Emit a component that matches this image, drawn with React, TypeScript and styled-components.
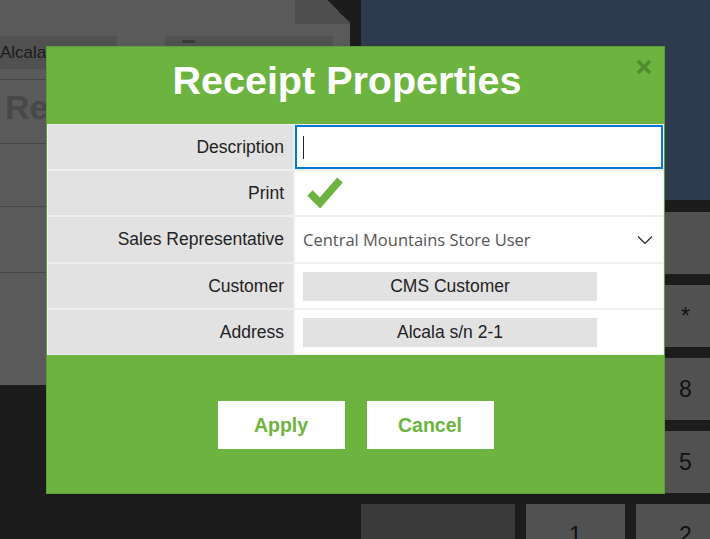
import styled, { createGlobalStyle } from "styled-components";

const GlobalStyle = createGlobalStyle`
    html, body {
        margin: 0;
        padding: 0;
        background: #1c1c1c;
        font-family: "Liberation Sans", Arial, sans-serif;
    }
`;

const Screen = styled.div`
    position: relative;
    width: 710px;
    height: 539px;
    overflow: hidden;
    display: flex;
    background-color: #1c1c1c;
`;

// ---- dimmed app behind the dialog ----
const LeftPanel = styled.div`
    width: 350px;
    height: 385px;
    flex-shrink: 0;
    display: flex;
    flex-direction: column;
    background-color: #5a5a5a;
`;

const TopStrip = styled.div`
    height: 36px;
    flex-shrink: 0;
    display: flex;
    justify-content: flex-end;
`;

const CornerTab = styled.div`
    width: 55px;
    height: 24px;
    background:
        linear-gradient(to bottom left, #1c1c1c 50%, transparent 50%) right top / 23px 23px no-repeat,
        #4e4e4e;
`;

const InfoRow = styled.div`
    height: 33px;
    flex-shrink: 0;
    display: flex;
    gap: 48px;
`;

const InfoBox = styled.div<{ $w: number }>`
    width: ${(p) => p.$w}px;
    background-color: #515151;
    color: #1a1a1a;
    font-size: 17px;
    line-height: 33px;
    display: flex;
    align-items: center;
    overflow: hidden;
    white-space: nowrap;
`;

const SmallGlyph = styled.span`
    width: 13px;
    height: 3px;
    margin: -22px 0 0 17px;
    background-color: #3a3a3a;
`;

const Section = styled.div<{ $h: number }>`
    height: ${(p) => p.$h}px;
    flex-shrink: 0;
    border-bottom: 1px solid #474747;
    box-sizing: border-box;
`;

const GhostTitle = styled.div`
    padding: 8px 0 0 5px;
    font-size: 34px;
    font-weight: bold;
    color: #484848;
`;

const Divider = styled.div`
    width: 11px;
    flex-shrink: 0;
`;

const RightPanel = styled.div`
    flex: 1;
    display: flex;
    flex-direction: column;
`;

const NavyBlock = styled.div`
    height: 200px;
    flex-shrink: 0;
    background-color: #2e3a4e;
`;

const Keypad = styled.div`
    padding-top: 12px;
    display: grid;
    grid-template-columns: 154px 99px 99px;
    grid-auto-rows: 62px;
    gap: 11px;
`;

const Key = styled.div<{ $dark?: boolean }>`
    background-color: ${(p) => (p.$dark ? "#3a3a3a" : "#515151")};
    color: #111;
    font-size: 23px;
    display: flex;
    align-items: center;
    justify-content: center;
`;

// ---- dialog ----
const Dialog = styled.div`
    position: absolute;
    left: 46px;
    top: 46px;
    width: 619px;
    box-sizing: border-box;
    border: 1px solid #5c9d35;
    background-color: #6db33f;
`;

const Header = styled.div`
    padding: 13px 17px 24px 0;
    line-height: 40px;
    font-size: 39.5px;
    font-weight: bold;
    color: #ffffff;
    text-align: center;
`;

const CloseButton = styled.div`
    position: absolute;
    right: 12px;
    top: 12px;
    width: 16px;
    height: 16px;
`;

const Form = styled.div`
    display: grid;
    grid-template-columns: 245px 1fr;
    grid-template-rows: 44px 44px 45px 44px 44px;
    gap: 2px;
    padding: 1px;
    background-color: #efefef;
`;

const Label = styled.div`
    background-color: #e2e2e2;
    color: #222;
    font-size: 17.5px;
    display: flex;
    align-items: center;
    justify-content: flex-end;
    padding-right: 9px;
`;

const Value = styled.div`
    background-color: #ffffff;
    display: flex;
    align-items: center;
    padding: 0 8px;
`;

const TextInput = styled.div`
    flex: 1;
    align-self: stretch;
    margin: 0 -8px;
    border: 2px solid #0078d7;
    display: flex;
    align-items: center;
    padding-left: 6px;
`;

const Caret = styled.span`
    width: 1px;
    height: 23px;
    background-color: #222;
`;

const SelectText = styled.div`
    flex: 1;
    font-family: "Open Sans", "Noto Sans", sans-serif;
    font-size: 16.5px;
    color: #555;
`;

const ReadOnlyBox = styled.div`
    width: 294px;
    height: 29px;
    background-color: #e2e2e2;
    color: #222;
    font-size: 17.5px;
    display: flex;
    align-items: center;
    justify-content: center;
`;

const Footer = styled.div`
    padding: 46px 0 44px;
    display: flex;
    justify-content: center;
    gap: 22px;
`;

const Button = styled.div`
    width: 127px;
    height: 48px;
    background-color: #ffffff;
    color: #6db33f;
    font-size: 19.5px;
    font-weight: bold;
    display: flex;
    align-items: center;
    justify-content: center;
`;

export default function App() {
    return (
        <>
            <GlobalStyle />
            <Screen>
                <LeftPanel>
                    <TopStrip>
                        <CornerTab />
                    </TopStrip>
                    <InfoRow>
                        <InfoBox $w={117}>{"Alcala s/n 2-1"}</InfoBox>
                        <InfoBox $w={168}>
                            <SmallGlyph />
                        </InfoBox>
                    </InfoRow>
                    <Section $h={11} />
                    <Section $h={64}>
                        <GhostTitle>{"Receipt"}</GhostTitle>
                    </Section>
                    <Section $h={63} />
                    <Section $h={66} />
                </LeftPanel>
                <Divider />
                <RightPanel>
                    <NavyBlock />
                    <Keypad>
                        <Key $dark />
                        <Key />
                        <Key />
                        <Key $dark />
                        <Key />
                        <Key>{"*"}</Key>
                        <Key $dark />
                        <Key />
                        <Key>{"8"}</Key>
                        <Key $dark />
                        <Key />
                        <Key>{"5"}</Key>
                        <Key $dark />
                        <Key>{"1"}</Key>
                        <Key>{"2"}</Key>
                    </Keypad>
                </RightPanel>

                <Dialog>
                    <Header>{"Receipt Properties"}</Header>
                    <CloseButton>
                        <svg width="16" height="16" viewBox="0 0 16 16">
                            <path d="M2 2 L14 14 M14 2 L2 14" stroke="#4f8c2e" strokeWidth="3.6" />
                        </svg>
                    </CloseButton>
                    <Form>
                        <Label>{"Description"}</Label>
                        <Value>
                            <TextInput>
                                <Caret />
                            </TextInput>
                        </Value>
                        <Label>{"Print"}</Label>
                        <Value>
                            <svg width="36" height="32" viewBox="0 0 36 32" style={{ marginLeft: 4, marginTop: -3 }}>
                                <path d="M3 17 L13 27 L33 4" fill="none" stroke="#6db33f" strokeWidth="7.5" />
                            </svg>
                        </Value>
                        <Label>{"Sales Representative"}</Label>
                        <Value>
                            <SelectText>{"Central Mountains Store User"}</SelectText>
                            <svg width="16" height="10" viewBox="0 0 16 10" style={{ marginRight: 2 }}>
                                <path d="M1 1.5 L8 8.5 L15 1.5" fill="none" stroke="#222" strokeWidth="1.2" />
                            </svg>
                        </Value>
                        <Label>{"Customer"}</Label>
                        <Value>
                            <ReadOnlyBox>{"CMS Customer"}</ReadOnlyBox>
                        </Value>
                        <Label>{"Address"}</Label>
                        <Value>
                            <ReadOnlyBox>{"Alcala s/n 2-1"}</ReadOnlyBox>
                        </Value>
                    </Form>
                    <Footer>
                        <Button>{"Apply"}</Button>
                        <Button>{"Cancel"}</Button>
                    </Footer>
                </Dialog>
            </Screen>
        </>
    );
}
